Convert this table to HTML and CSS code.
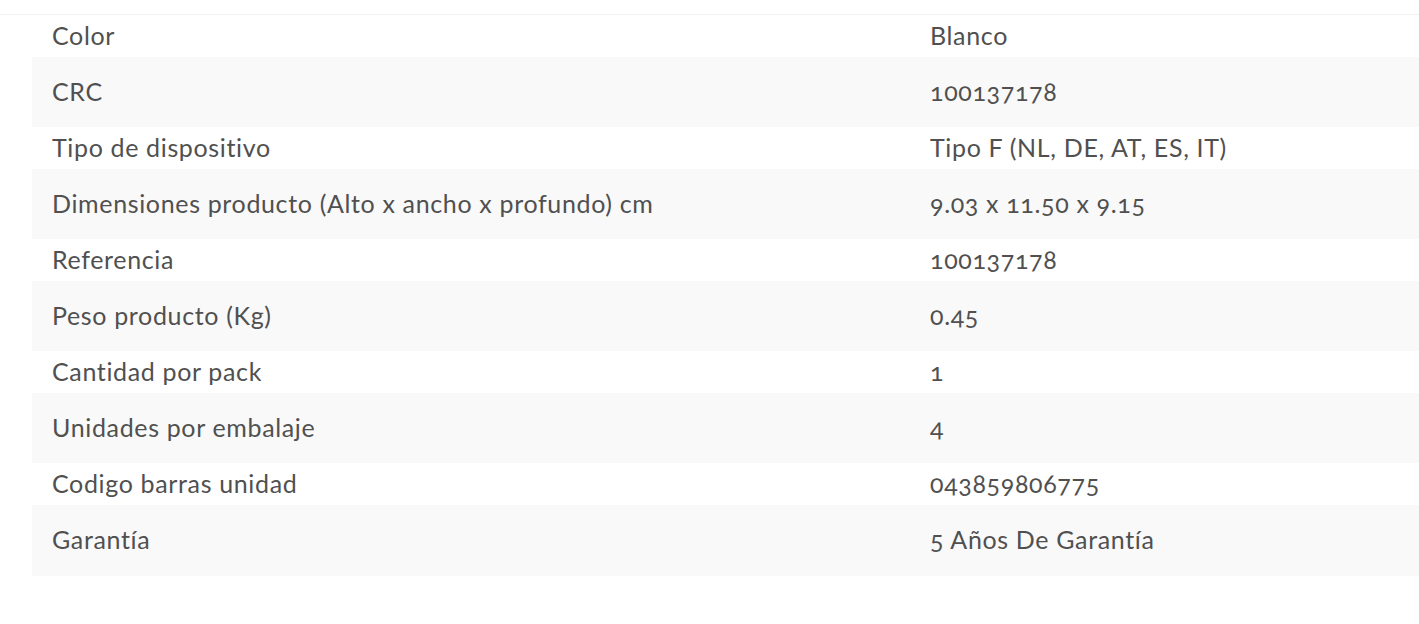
FILE: index.html
```html
<!DOCTYPE html>
<html lang="es">
<head>
<meta charset="utf-8">
<title>Especificaciones</title>
<link rel="stylesheet" href="styles.css">
</head>
<body>
<div class="page">
  <div class="specs">
    <div class="row"><div class="label">Color</div><div class="value">Blanco</div></div>
    <div class="row alt"><div class="label">CRC</div><div class="value">100137178</div></div>
    <div class="row"><div class="label">Tipo de dispositivo</div><div class="value">Tipo F (NL, DE, AT, ES, IT)</div></div>
    <div class="row alt"><div class="label">Dimensiones producto (Alto x ancho x profundo) cm</div><div class="value">9.03 x 11.50 x 9.15</div></div>
    <div class="row"><div class="label">Referencia</div><div class="value">100137178</div></div>
    <div class="row alt"><div class="label">Peso producto (Kg)</div><div class="value">0.45</div></div>
    <div class="row"><div class="label">Cantidad por pack</div><div class="value">1</div></div>
    <div class="row alt"><div class="label">Unidades por embalaje</div><div class="value">4</div></div>
    <div class="row"><div class="label">Codigo barras unidad</div><div class="value">043859806775</div></div>
    <div class="row alt"><div class="label">Garantía</div><div class="value">5 Años De Garantía</div></div>
  </div>
</div>
</body>
</html>
```
FILE: styles.css
```css
html, body {
  margin: 0;
  padding: 0;
  background: #ffffff;
}
body {
  font-family: Lato, "Open Sans", "Liberation Sans", sans-serif;
  font-size: 25px;
  letter-spacing: 0.65px;
  color: #505050;
  font-variant-numeric: oldstyle-nums;
}
.page {
  padding-top: 14px;
}
.specs {
  border-top: 1px solid #f1f1f1;
  padding-left: 32px;
}
.row {
  display: grid;
  grid-template-columns: 878px 1fr;
  align-items: center;
  height: 42px;
}
.row.alt {
  height: 70px;
  background: #f9f9f9;
}
.row.alt:last-child {
  height: 71px;
}
.label, .value {
  padding: 0 20px 3px;
  white-space: nowrap;
}
```
